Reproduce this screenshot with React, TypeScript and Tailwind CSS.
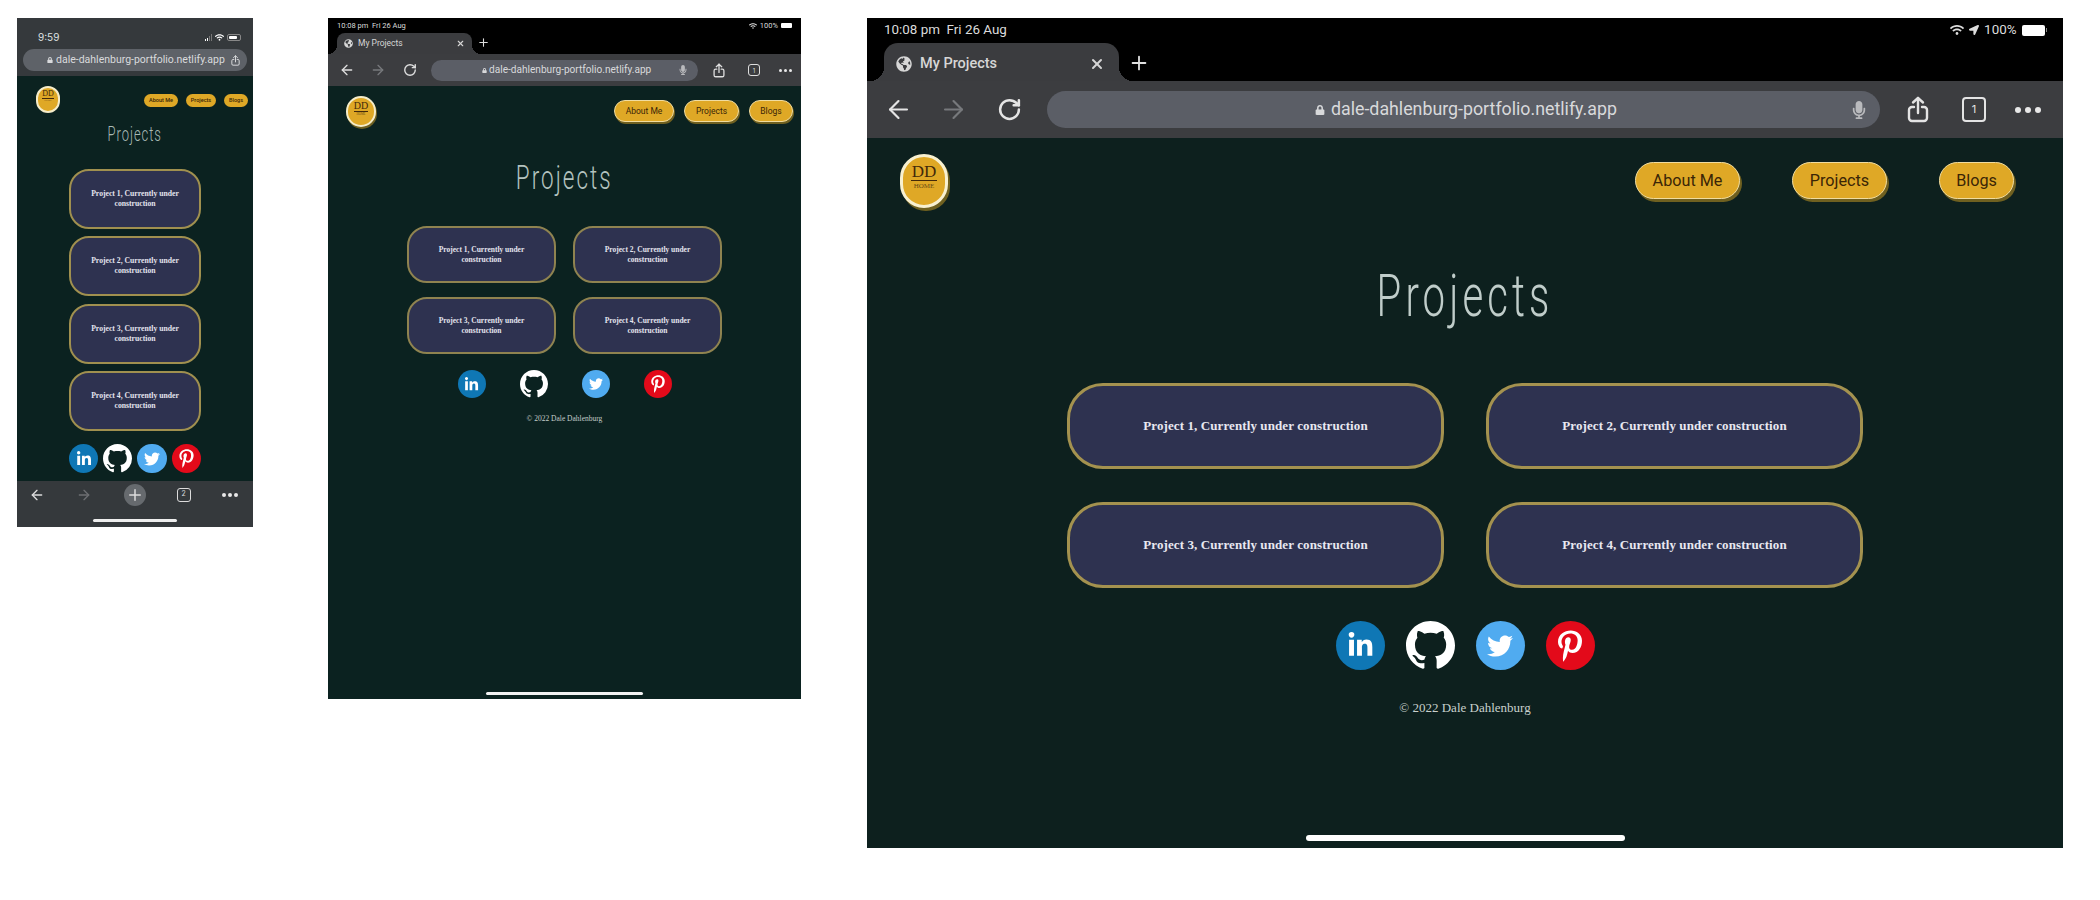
import React from "react";
import { ArrowLeft, ArrowRight, RotateCw, X, Plus } from "lucide-react";
import { FaLock, FaWifi, FaLocationArrow, FaGlobeAmericas, FaLinkedinIn, FaTwitter, FaPinterestP, FaMicrophone } from "react-icons/fa";
import { BsGithub } from "react-icons/bs";

const URL_TEXT = "dale-dahlenburg-portfolio.netlify.app";
const cards = [1, 2, 3, 4].map((n) => `Project ${n}, Currently under construction`);

function ShareIcon({ w, h, className }: { w: number; h: number; className?: string }) {
  return (
    <svg width={w} height={h} viewBox="0 0 22 27" fill="none" stroke="currentColor" strokeWidth="2.4" strokeLinecap="round" strokeLinejoin="round" className={className}>
      <path d="M7 11H5a3 3 0 0 0-3 3v8a3 3 0 0 0 3 3h12a3 3 0 0 0 3-3v-8a3 3 0 0 0-3-3h-2" />
      <path d="M11 17V2" />
      <path d="M6 6.5 11 2l5 4.5" />
    </svg>
  );
}

function Socials({ size, icon, className }: { size: string; icon: { li: number; tw: number; pi: number; gh: number }; className: string }) {
  return (
    <div className={`flex justify-center ${className}`}>
      <div className={`${size} rounded-full bg-[#0f77b5] flex items-center justify-center text-white`}><FaLinkedinIn size={icon.li} /></div>
      <div className={`${size} flex items-center justify-center text-white`}><BsGithub size={icon.gh} /></div>
      <div className={`${size} rounded-full bg-[#50abf0] flex items-center justify-center text-white`}><FaTwitter size={icon.tw} /></div>
      <div className={`${size} rounded-full bg-[#e30a1a] flex items-center justify-center text-white`}><FaPinterestP size={icon.pi} /></div>
    </div>
  );
}

function Dots({ className }: { className: string }) {
  return (
    <div className={`flex items-center ${className}`}>
      <span className="size-[1em] rounded-full bg-[#e8e8e8]" />
      <span className="size-[1em] rounded-full bg-[#e8e8e8]" />
      <span className="size-[1em] rounded-full bg-[#e8e8e8]" />
    </div>
  );
}

function Phone() {
  return (
    <div className="w-[236px] h-[509px] shrink-0 flex flex-col bg-[#0b2220]">
      <div className="h-[58px] bg-[#35393c] flex flex-col">
        <div className="h-[31px] pl-[21px] pr-[12px] pt-[8px] flex items-center justify-between text-[10px] text-[#dfe1e2] font-['Inter',sans-serif]">
          <span>9:59</span>
          <div className="flex items-center gap-[3px]">
            <div className="flex items-end gap-[1px] h-[7px]">
              <span className="w-[1px] h-[2px] bg-white" />
              <span className="w-[1px] h-[3px] bg-white" />
              <span className="w-[1px] h-[5px] bg-[#777]" />
              <span className="w-[1px] h-[7px] bg-[#777]" />
            </div>
            <FaWifi size={9} className="text-white" />
            <div className="w-[14px] h-[7px] rounded-[2px] border border-[#888] p-[1px] flex"><span className="w-[8px] bg-white rounded-[1px]" /></div>
          </div>
        </div>
        <div className="mx-[6px] h-[22px] rounded-full bg-[#5e6268] flex items-center pl-[24px] gap-[3px] text-[10.5px] text-[#d9dadc] font-['Roboto',sans-serif] whitespace-nowrap">
          <FaLock size={6} />
          <span>{URL_TEXT}</span>
          <ShareIcon w={9} h={11} className="ml-[3px]" />
        </div>
      </div>

      <div className="flex-1 flex flex-col items-center">
        <div className="w-full flex items-start justify-between pt-[10px] pl-[19px] pr-[5px]">
          <div className="w-[24px] h-[27px] rounded-full bg-[#dfa826] border-2 border-[#f5ecc9] flex flex-col items-center pt-[2px] font-['Liberation_Serif',serif] text-[#42280a]">
            <span className="text-[8px] leading-[8px] border-b-[0.5px] border-[#42280a]">DD</span>
            <span className="text-[2.5px] leading-[4px] text-[#6b4c14]">HOME</span>
          </div>
          <div className="flex gap-[8px] pt-[8px] font-['Roboto',sans-serif] font-medium text-[#3a2506] text-[5.5px]">
            <span className="w-[34px] h-[13px] rounded-full bg-[#dfa826] flex items-center justify-center">About Me</span>
            <span className="w-[30px] h-[13px] rounded-full bg-[#dfa826] flex items-center justify-center">Projects</span>
            <span className="w-[24px] h-[13px] rounded-full bg-[#dfa826] flex items-center justify-center">Blogs</span>
          </div>
        </div>
        <div className="mt-[9px] h-[24px] leading-[24px] text-[21px] font-light font-['Roboto',sans-serif] text-[#a9bab6] scale-x-[0.62] tracking-[1.5px]">Projects</div>
        <div className="mt-[23px] w-[132px] flex flex-col gap-[7.33px]">
          {cards.map((c) => (
            <div key={c} className="h-[60px] rounded-[20px] border-2 border-[#a0904f] bg-[#2e3250] flex items-center justify-center text-center px-[16px] font-['Liberation_Serif',serif] font-bold text-[7.7px] leading-[10px] text-[#e4e4ee]">{c}</div>
          ))}
        </div>
        <Socials size="size-[29.5px]" icon={{ li: 16, gh: 29, tw: 16, pi: 19 }} className="mt-[13px] gap-[4.7px]" />
      </div>

      <div className="h-[46px] bg-[#35393c] flex flex-col">
        <div className="h-[27px] pl-[12px] pr-[15px] flex items-center justify-between text-[#dcdcdc]">
          <ArrowLeft size={16} />
          <ArrowRight size={16} className="text-[#6d6f72]" />
          <div className="size-[22px] rounded-full bg-[#666a6e] flex items-center justify-center"><Plus size={18} /></div>
          <div className="size-[14px] rounded-[3px] border border-[#dcdcdc] flex items-center justify-center text-[7px] font-['Inter',sans-serif]">2</div>
          <Dots className="text-[4px] gap-[2px]" />
        </div>
        <div className="mt-[11px] mx-auto w-[84px] h-[3px] rounded-full bg-[#eeeeee]" />
      </div>
    </div>
  );
}

function Tablet() {
  return (
    <div className="w-[473px] h-[681px] shrink-0 flex flex-col bg-[#0b2220]">
      <div className="h-[36px] bg-black flex flex-col">
        <div className="h-[15px] px-[9px] flex items-center justify-between text-[7.5px] text-[#dcdcdc] font-['Roboto',sans-serif]">
          <span>10:08 pm&nbsp;&nbsp;Fri 26 Aug</span>
          <div className="flex items-center gap-[3px]">
            <FaWifi size={8} />
            <span>100%</span>
            <div className="w-[11px] h-[5.5px] bg-white rounded-[1px]" />
          </div>
        </div>
        <div className="flex-1 flex items-center pl-[9px]">
          <div className="w-[135px] h-[21px] rounded-t-[8px] bg-[#3b3c3f] flex items-center pl-[7px] pr-[7px] text-[8.5px] text-[#d6d6d6] font-['Roboto',sans-serif] relative before:absolute before:bottom-0 before:left-[-9px] before:size-[9px] before:bg-[radial-gradient(circle_at_0_0,transparent_9px,#3b3c3f_9px)] after:absolute after:bottom-0 after:right-[-9px] after:size-[9px] after:bg-[radial-gradient(circle_at_100%_0,transparent_9px,#3b3c3f_9px)]">
            <FaGlobeAmericas size={9} />
            <span className="ml-[5px]">My Projects</span>
            <X size={9} strokeWidth={3} className="ml-auto" />
          </div>
          <Plus size={13} className="ml-[5px] mt-[-3px] text-[#dddddd]" />
        </div>
      </div>
      <div className="h-[32px] bg-[#3c3d40] flex items-center pl-[11px] text-[#dedede]">
        <ArrowLeft size={16} />
        <ArrowRight size={16} className="ml-[15px] text-[#77797c]" />
        <RotateCw size={14} strokeWidth={2.4} className="ml-[17px]" />
        <div className="ml-[14px] w-[267px] h-[21px] rounded-full bg-[#5b5e66] flex items-center pl-[51px] gap-[2px] pr-[10px] text-[10.1px] text-[#d8d9db] font-['Roboto',sans-serif] whitespace-nowrap">
          <FaLock size={5} />
          <span>{URL_TEXT}</span>
          <FaMicrophone size={10} className="ml-auto text-[#b9babd]" />
        </div>
        <ShareIcon w={12} h={15} className="ml-[15px]" />
        <div className="ml-[23px] size-[12px] rounded-[3px] border border-[#dedede] flex items-center justify-center text-[6px] font-['Inter',sans-serif]">1</div>
        <Dots className="ml-[19px] text-[3px] gap-[2px]" />
      </div>

      <div className="flex-1 flex flex-col items-center">
        <div className="w-full flex items-start justify-between pt-[10px] pl-[18px] pr-[8px]">
          <div className="w-[30px] h-[31px] rounded-full bg-[#dfa826] border-2 border-[#f5ecc9] shadow-[1px_2px_0_#6f6020] flex flex-col items-center pt-[3px] font-['Liberation_Serif',serif] text-[#42280a]">
            <span className="text-[10px] leading-[10px] border-b-[0.5px] border-[#42280a]">DD</span>
            <span className="text-[3px] leading-[5px] text-[#6b4c14]">HOME</span>
          </div>
          <div className="flex gap-[10px] pt-[4px] font-['Roboto',sans-serif] text-[#3a2506] text-[8.5px]">
            <span className="w-[60px] h-[22px] rounded-full bg-[#dfa826] border border-[#f0dca0] shadow-[1px_2px_0_#6f6020] flex items-center justify-center">About Me</span>
            <span className="w-[55px] h-[22px] rounded-full bg-[#dfa826] border border-[#f0dca0] shadow-[1px_2px_0_#6f6020] flex items-center justify-center">Projects</span>
            <span className="w-[44px] h-[22px] rounded-full bg-[#dfa826] border border-[#f0dca0] shadow-[1px_2px_0_#6f6020] flex items-center justify-center">Blogs</span>
          </div>
        </div>
        <div className="mt-[33px] h-[36px] leading-[36px] text-[33px] font-light font-['Roboto',sans-serif] text-[#b3c3bf] scale-x-[0.68] tracking-[3px]">Projects</div>
        <div className="mt-[30px] grid grid-cols-[149px_149px] gap-x-[17px] gap-y-[14px]">
          {cards.map((c) => (
            <div key={c} className="h-[57px] rounded-[20px] border-2 border-[#8f8350] bg-[#2e3250] flex items-center justify-center text-center px-[26px] font-['Liberation_Serif',serif] font-bold text-[7.5px] leading-[9.4px] text-[#e4e4ee]">{c}</div>
          ))}
        </div>
        <Socials size="size-[28px]" icon={{ li: 15, gh: 28, tw: 14, pi: 18 }} className="mt-[16px] gap-[34px]" />
        <div className="mt-[16px] text-[7.5px] leading-[10px] font-['Liberation_Serif',serif] text-[#c3ccc9]">© 2022 Dale Dahlenburg</div>
        <div className="mt-auto mb-[4px] w-[157px] h-[3px] rounded-full bg-[#f2f2f2]" />
      </div>
    </div>
  );
}

function Desktop() {
  return (
    <div className="w-[1196px] h-[830px] shrink-0 flex flex-col bg-[#0d201e]">
      <div className="h-[63px] bg-black flex flex-col">
        <div className="h-[25px] pl-[17px] pr-[16px] flex items-center justify-between text-[13.4px] text-[#dcdcdc] font-['Roboto',sans-serif]">
          <span>10:08 pm&nbsp;&nbsp;Fri 26 Aug</span>
          <div className="flex items-center gap-[5px]">
            <FaWifi size={14} />
            <FaLocationArrow size={10} />
            <span>100%</span>
            <div className="flex items-center gap-[1px]">
              <div className="w-[23px] h-[11px] bg-white rounded-[2px]" />
              <div className="w-[1.5px] h-[4px] bg-[#888]" />
            </div>
          </div>
        </div>
        <div className="flex-1 flex items-end pl-[17px]">
          <div className="w-[235px] h-[38px] pt-[3px] rounded-t-[14px] bg-[#3b3c3f] flex items-center pl-[12px] pr-[14px] text-[14.5px] text-[#d6d6d6] font-['Roboto',sans-serif] font-medium relative before:absolute before:bottom-0 before:left-[-14px] before:size-[14px] before:bg-[radial-gradient(circle_at_0_0,transparent_14px,#3b3c3f_14px)] after:absolute after:bottom-0 after:right-[-14px] after:size-[14px] after:bg-[radial-gradient(circle_at_100%_0,transparent_14px,#3b3c3f_14px)]">
            <FaGlobeAmericas size={16} />
            <span className="ml-[8px]">My Projects</span>
            <X size={16} strokeWidth={3} className="ml-auto" />
          </div>
          <Plus size={22} className="ml-[9px] mb-[7px] text-[#e0e0e0]" />
        </div>
      </div>
      <div className="h-[57px] bg-[#3c3d40] flex items-center pl-[17px] text-[#e4e4e4]">
        <ArrowLeft size={29} strokeWidth={1.8} />
        <ArrowRight size={29} strokeWidth={1.8} className="ml-[26px] text-[#77797c]" />
        <RotateCw size={25} strokeWidth={2.4} className="ml-[29px]" />
        <div className="ml-[25px] w-[833px] h-[37px] rounded-full bg-[#5b5e66] flex items-center pl-[268px] gap-[6px] pr-[12px] text-[17.8px] text-[#d8d9db] font-['Roboto',sans-serif] whitespace-nowrap">
          <FaLock size={10} />
          <span>{URL_TEXT}</span>
          <FaMicrophone size={18} className="ml-auto text-[#b9babd]" />
        </div>
        <ShareIcon w={22} h={27} className="ml-[27px]" />
        <div className="ml-[33px] w-[24px] h-[25px] rounded-[4px] border-2 border-[#e4e4e4] flex items-center justify-center text-[11px] font-['Inter',sans-serif]">1</div>
        <Dots className="ml-[29px] text-[6px] gap-[4px]" />
      </div>

      <div className="flex-1 flex flex-col items-center">
        <div className="w-full flex items-start justify-between pt-[16px] pl-[33px] pr-[49px]">
          <div className="w-[48px] h-[54px] rounded-full bg-[#dfa826] border-[3px] border-[#f8f0d0] shadow-[2px_3px_0_#6f6020] flex flex-col items-center pt-[7px] font-['Liberation_Serif',serif] text-[#42280a]">
            <span className="text-[17px] leading-[16px] border-b border-[#42280a] px-[1px]">DD</span>
            <span className="text-[7px] leading-[11px] text-[#6b4c14]">HOME</span>
          </div>
          <div className="flex gap-[52px] pt-[8px] font-['Roboto',sans-serif] text-[#3a2506] text-[16.2px]">
            <span className="w-[105px] h-[37px] pt-[1px] rounded-full bg-[#dfa826] border-[1.5px] border-[#f0dca0] shadow-[2px_3px_0_#6f6020] flex items-center justify-center">About Me</span>
            <span className="w-[95px] h-[37px] pt-[1px] rounded-full bg-[#dfa826] border-[1.5px] border-[#f0dca0] shadow-[2px_3px_0_#6f6020] flex items-center justify-center">Projects</span>
            <span className="w-[75px] h-[37px] pt-[1px] rounded-full bg-[#dfa826] border-[1.5px] border-[#f0dca0] shadow-[2px_3px_0_#6f6020] flex items-center justify-center">Blogs</span>
          </div>
        </div>
        <div className="mt-[56px] h-[64px] leading-[64px] text-[59px] font-light font-['Roboto',sans-serif] text-[#c0cdca] scale-x-[0.68] tracking-[6px]">Projects</div>
        <div className="mt-[55px] grid grid-cols-[377px_377px] gap-x-[42px] gap-y-[33px]">
          {cards.map((c) => (
            <div key={c} className="h-[86px] rounded-[36px] border-[3px] border-[#a4924f] bg-[#2e3250] flex items-center justify-center text-center font-['Liberation_Serif',serif] font-bold text-[13px] tracking-[0.1px] text-[#e8e8f0]">{c}</div>
          ))}
        </div>
        <Socials size="size-[49px]" icon={{ li: 27, gh: 49, tw: 26, pi: 32 }} className="mt-[33px] gap-[21px]" />
        <div className="mt-[28px] text-[13px] leading-[20px] font-['Liberation_Serif',serif] text-[#c8d0cc]">© 2022 Dale Dahlenburg</div>
        <div className="mt-auto mb-[7px] w-[319px] h-[6px] rounded-full bg-white" />
      </div>
    </div>
  );
}

export default function App() {
  return (
    <div className="w-[2100px] h-[900px] bg-white flex items-start pt-[18px] pl-[17px]">
      <Phone />
      <div className="ml-[75px]"><Tablet /></div>
      <div className="ml-[66px]"><Desktop /></div>
    </div>
  );
}
